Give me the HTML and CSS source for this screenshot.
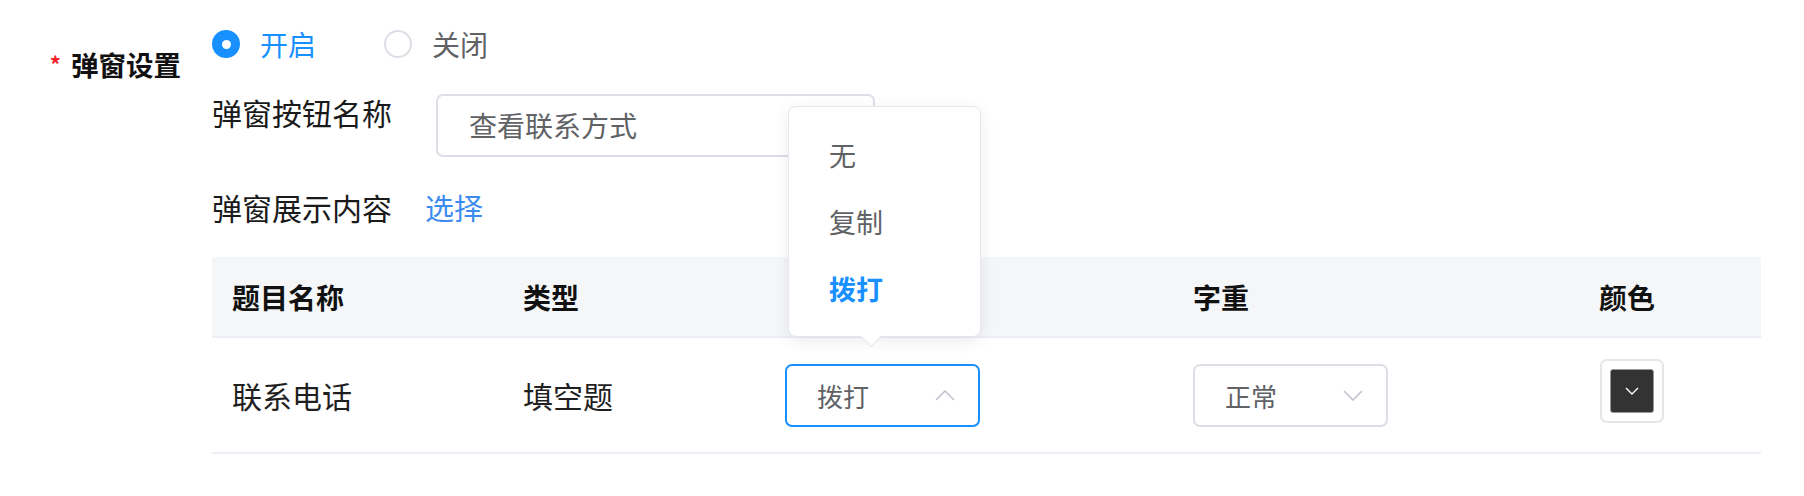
FILE: index.html
```html
<!DOCTYPE html>
<html lang="zh-CN">
<head>
<meta charset="utf-8">
<link rel="stylesheet" href="styles.css">
</head>
<body>
<div class="form-item">
  <div class="form-label"><span class="req">*</span>弹窗设置</div>
  <div class="form-content">
    <div class="radio-group">
      <label class="radio checked"><span class="radio-dot"></span><span class="radio-text">开启</span></label>
      <label class="radio"><span class="radio-dot"></span><span class="radio-text">关闭</span></label>
    </div>
    <div class="sub-row">
      <div class="sub-label">弹窗按钮名称</div>
      <div class="input">查看联系方式</div>
    </div>
    <div class="sub-row mid">
      <div class="sub-label">弹窗展示内容</div>
      <a class="link">选择</a>
    </div>
    <div class="table">
      <div class="tr thead">
        <div class="td">题目名称</div>
        <div class="td">类型</div>
        <div class="td">操作</div>
        <div class="td">字重</div>
        <div class="td">颜色</div>
      </div>
      <div class="tr tbody">
        <div class="td">联系电话</div>
        <div class="td">填空题</div>
        <div class="td">
          <div class="select-wrap">
            <div class="select active"><span>拨打</span>
              <svg class="chev" width="20" height="11" viewBox="0 0 20 11"><path d="M1 10 L10 1 L19 10" fill="none" stroke="#c0c4cc" stroke-width="1.6"/></svg>
            </div>
            <div class="popup">
              <div class="popup-item">无</div>
              <div class="popup-item">复制</div>
              <div class="popup-item selected">拨打</div>
              <div class="popup-arrow"></div>
            </div>
          </div>
        </div>
        <div class="td">
          <div class="select"><span>正常</span>
            <svg class="chev" width="20" height="11" viewBox="0 0 20 11"><path d="M1 1 L10 10 L19 1" fill="none" stroke="#c0c4cc" stroke-width="1.6"/></svg>
          </div>
        </div>
        <div class="td">
          <div class="color-picker"><div class="color-box">
            <svg width="14" height="8" viewBox="0 0 14 8"><path d="M1 1 L7 7 L13 1" fill="none" stroke="#ffffff" stroke-width="1.4"/></svg>
          </div></div>
        </div>
      </div>
    </div>
  </div>
</div>
</body>
</html>
```
FILE: styles.css
```css
* { box-sizing: border-box; }
html, body { margin: 0; padding: 0; background: #fff; }
body {
  font-family: "Noto Sans CJK SC", "Noto Sans", sans-serif;
  color: #1f1f1f;
  width: 1804px;
  height: 496px;
  overflow: hidden;
}
.form-item {
  display: flex;
  align-items: flex-start;
}
.form-label {
  width: 212px;
  padding-right: 31px;
  padding-top: 44px;
  text-align: right;
  font-size: 27.5px;
  font-weight: 700;
  line-height: 40px;
  color: #111;
}
.req {
  color: #f5222d;
  font-size: 22px;
  margin-right: 10px;
  position: relative;
  top: -3px;
}
.form-content {
  width: 1549px;
  padding-top: 24px;
  display: flex;
  flex-direction: column;
}
.radio-group {
  display: flex;
  align-items: center;
  height: 40px;
}
.radio {
  display: flex;
  align-items: center;
  margin-right: 68px;
  font-size: 28px;
  color: #606266;
}
.radio-dot {
  width: 28px;
  height: 28px;
  border-radius: 50%;
  border: 2px solid #dcdfe6;
  background: #fff;
  margin-right: 20px;
  position: relative;
}
.radio.checked .radio-dot {
  border-color: #1890ff;
  background: #1890ff;
}
.radio.checked .radio-dot::after {
  content: "";
  position: absolute;
  left: 50%;
  top: 50%;
  width: 9px;
  height: 9px;
  margin: -4.5px 0 0 -4.5px;
  border-radius: 50%;
  background: #fff;
}
.radio.checked .radio-text { color: #1890ff; }
.sub-row {
  display: flex;
  align-items: flex-start;
  margin-top: 30px;
}
.sub-row.mid { margin-top: 30px; }
.sub-label {
  font-size: 30px;
  line-height: 36px;
  color: #1a1a1a;
  width: 224px;
}
.sub-row.mid .sub-label { width: 213px; line-height: 40px; }
.input {
  width: 439px;
  height: 63px;
  border: 2px solid #dcdfe6;
  border-radius: 7px;
  padding-left: 31px;
  font-size: 28px;
  line-height: 59px;
  color: #606266;
}
.link {
  font-size: 29px;
  line-height: 40px;
  color: #3c8cf0;
}
.table { margin-top: 30px; }
.tr {
  display: grid;
  grid-template-columns: 291px 262px 408px 406px 182px;
  border-bottom: 2px solid #ebeef5;
}
.thead {
  height: 81px;
  background: #f5f6f8;
  font-weight: 700;
  font-size: 28px;
  color: #111;
}
.tbody {
  height: 116px;
  font-size: 30px;
  color: #1f1f1f;
}
.td {
  display: flex;
  align-items: center;
  padding-left: 20px;
}
.thead .td:nth-child(3) { visibility: hidden; }
.select-wrap { position: relative; }
.select {
  width: 195px;
  height: 63px;
  border: 2px solid #dcdfe6;
  border-radius: 7px;
  display: flex;
  align-items: center;
  justify-content: space-between;
  padding: 0 23px 0 30px;
  font-size: 26px;
  color: #606266;
}
.select.active { border-color: #1890ff; }
.popup {
  position: absolute;
  left: 3px;
  bottom: 90px;
  width: 193px;
  height: 231px;
  background: #fff;
  border: 1px solid #e4e7ed;
  border-radius: 8px;
  box-shadow: 0 4px 16px rgba(0, 0, 0, 0.08);
  padding-top: 14px;
  z-index: 5;
}
.popup-item {
  height: 67px;
  line-height: 67px;
  padding-left: 40px;
  font-size: 27px;
  color: #606266;
}
.popup-item.selected { color: #1890ff; font-weight: 700; }
.popup-arrow {
  position: absolute;
  left: 75px;
  bottom: -8px;
  width: 14px;
  height: 14px;
  background: #fff;
  border-right: 1px solid #e4e7ed;
  border-bottom: 1px solid #e4e7ed;
  transform: rotate(45deg);
}
.color-picker {
  width: 64px;
  height: 64px;
  border: 2px solid #e6e6e6;
  border-radius: 7px;
  padding: 8px;
  margin-top: -9px;
  margin-left: 1px;
}
.color-box {
  width: 100%;
  height: 100%;
  background: #333;
  border: 1px solid #999;
  border-radius: 3px;
  display: flex;
  align-items: center;
  justify-content: center;
}
```
